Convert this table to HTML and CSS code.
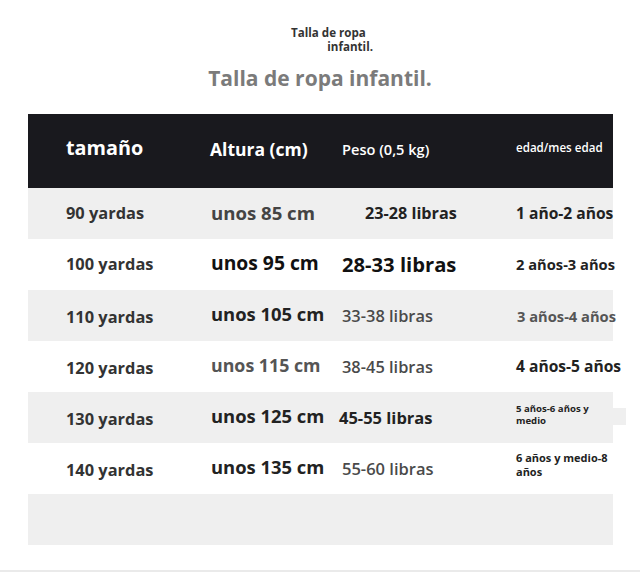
FILE: index.html
```html
<!DOCTYPE html>
<html lang="es">
<head>
<meta charset="utf-8">
<link rel="stylesheet" href="styles.css">
</head>
<body>
<div class="page">
  <div class="tag">
    <span class="tag-l1">Talla de ropa</span>
    <span class="tag-l2">infantil.</span>
  </div>
  <h1 class="title">Talla de ropa infantil.</h1>
  <div class="table">
    <div class="row head">
      <div class="c h1">tamaño</div>
      <div class="c h2">Altura (cm)</div>
      <div class="c h3">Peso (0,5 kg)</div>
      <div class="c h4">edad/mes edad</div>
    </div>
    <div class="row gray">
      <div class="c size">90 yardas</div>
      <div class="c alt t-mid">unos 85 cm</div>
      <div class="c wt shift dark">23-28 libras</div>
      <div class="c age">1 año-2 años</div>
    </div>
    <div class="row">
      <div class="c size">100 yardas</div>
      <div class="c alt big">unos 95 cm</div>
      <div class="c wt huge">28-33 libras</div>
      <div class="c age sm">2 años-3 años</div>
    </div>
    <div class="row gray">
      <div class="c size low">110 yardas</div>
      <div class="c alt dark">unos 105 cm</div>
      <div class="c wt mid">33-38 libras</div>
      <div class="c age sm midc nudge">3 años-4 años</div>
    </div>
    <div class="row">
      <div class="c size low">120 yardas</div>
      <div class="c alt t-light">unos 115 cm</div>
      <div class="c wt mid">38-45 libras</div>
      <div class="c age">4 años-5 años</div>
    </div>
    <div class="row gray r5">
      <div class="c size low">130 yardas</div>
      <div class="c alt dark">unos 125 cm</div>
      <div class="c wt dark b16 back">45-55 libras</div>
      <div class="c age tiny">5 años-6 años y<br>medio</div>
      <span class="tab"></span>
    </div>
    <div class="row">
      <div class="c size low">140 yardas</div>
      <div class="c alt dark">unos 135 cm</div>
      <div class="c wt mid b16">55-60 libras</div>
      <div class="c age small2">6 años y medio-8<br>años</div>
    </div>
    <div class="row gray"></div>
  </div>
  <div class="rule"></div>
</div>
</body>
</html>
```

FILE: styles.css
```css
* { box-sizing: border-box; }
html, body { margin: 0; padding: 0; background: #fff; }
body { font-family: "Open Sans", "Noto Sans", sans-serif; color: #333; }

.page { width: 640px; height: 572px; padding-top: 26px; position: relative; }

.tag {
  width: 82px;
  margin-left: 291px;
  display: flex;
  flex-direction: column;
  font-size: 11.6px;
  font-weight: 700;
  line-height: 14px;
  color: #333;
}
.tag-l1 { align-self: flex-start; white-space: nowrap; }
.tag-l2 { align-self: flex-end; }

.title {
  margin: 10px 0 0;
  text-align: center;
  font-size: 21px;
  font-weight: 700;
  color: #7b7b7b;
  line-height: 28px;
}

.table { margin: 22px 0 0 28px; width: 585px; }

.row {
  display: grid;
  grid-template-columns: 144px 132px 174px 1fr;
  align-items: center;
  padding-left: 38px;
  height: 51px;
  position: relative;
}
.row.gray { background: #efefef; }
.row.head { background: #19191e; height: 74px; color: #fff; }

.c { white-space: nowrap; font-weight: 700; }
.h1 { font-size: 19.8px; margin-top: -7px; }
.h2 { font-size: 17.5px; margin-top: -5px; }
.h3 { font-size: 14.6px; margin-top: -5px; font-weight: 600; }
.h4 { font-size: 11.6px; margin-top: -7px; font-weight: 600; }

.size { font-size: 16.4px; color: #333; margin-top: -2px; }
.size.low { margin-top: 2px; }
.alt { font-size: 18.4px; color: #333; margin-left: 1px; }
.alt.big { font-size: 19.3px; color: #111; margin-top: -5px; }
.alt.dark { color: #222; margin-top: -4px; }
.t-mid { color: #444; margin-top: -3px; font-size: 18.6px; }
.t-light { color: #555; margin-top: -4px; font-size: 17.8px; }

.wt { font-size: 16.2px; color: #444; margin-top: -1px; }
.wt.shift { margin-left: 23px; }
.wt.huge { font-size: 20.2px; color: #111; margin-top: -2px; }
.wt.mid { color: #4a4a4a; font-weight: 600; font-size: 16.4px; }
.wt.dark { color: #222; }
.wt.b16 { font-size: 16.5px; }
.wt.back { margin-left: -3px; }

.age { font-size: 15.6px; color: #222; margin-top: -2px; }
.age.sm { font-size: 14.7px; }
.age.midc { color: #555; margin-top: 0; }
.age.nudge { margin-left: 1px; }
.age.tiny { font-size: 9.6px; line-height: 12px; margin-top: -6px; }
.age.small2 { font-size: 11px; line-height: 13.5px; margin-top: -8px; }

.tab {
  position: absolute;
  left: 585px;
  top: 16px;
  width: 13px;
  height: 17px;
  background: #efefef;
}

.rule {
  position: absolute;
  left: 0;
  right: 0;
  bottom: 0;
  height: 2px;
  background: #eaeaea;
}
```
